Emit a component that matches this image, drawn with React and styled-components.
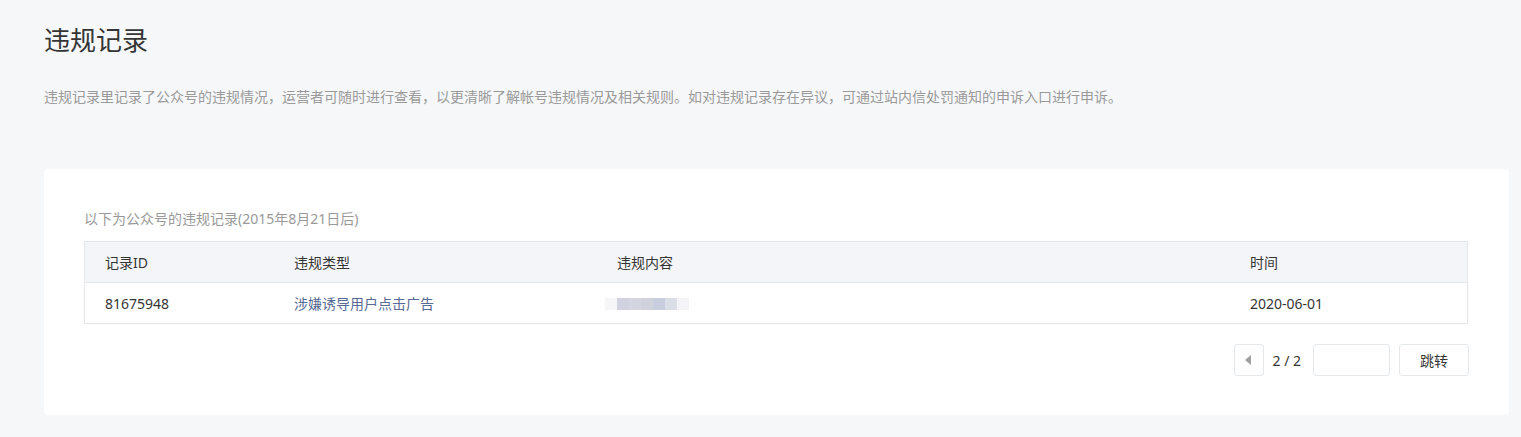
import React from 'react'
import styled, { createGlobalStyle } from 'styled-components'

const GlobalStyle = createGlobalStyle`
  html, body {
    margin: 0;
    padding: 0;
    background: #f6f7f9;
  }
  body {
    font-family: "Noto Sans", "Noto Sans CJK SC", sans-serif;
    color: #353535;
  }
`

const Page = styled.div`
  padding: 22px 12px 0 44px;
`

const Title = styled.h2`
  margin: 0;
  font-size: 26px;
  font-weight: 400;
  line-height: 36px;
  color: #353535;
`

const Desc = styled.p`
  margin: 29px 0 0;
  font-size: 14px;
  line-height: 20px;
  color: #9a9a9a;
`

const Card = styled.div`
  margin-top: 62px;
  background: #fff;
  border-radius: 4px;
  padding: 40px 41px 39px 40px;
`

const Caption = styled.div`
  font-size: 14px;
  line-height: 20px;
  color: #9a9a9a;
`

const Table = styled.div`
  margin-top: 12px;
  border: 1px solid #e4e6eb;
`

const Row = styled.div`
  display: grid;
  grid-template-columns: 189px 323px 633px 1fr;
  align-items: center;
  height: 40px;
  padding-left: 20px;
  font-size: 14px;
  background: ${p => (p.$head ? '#f4f5f8' : '#fff')};
  border-bottom: ${p => (p.$head ? '1px solid #e4e6eb' : 'none')};
`

const Cell = styled.div`
  color: ${p => (p.$link ? '#576b95' : '#353535')};
  white-space: nowrap;
`

const Mosaic = styled.div`
  display: flex;
  height: 12px;
  margin-left: -12px;
  margin-top: 2px;
`

const Tile = styled.span`
  width: 12px;
  height: 12px;
  background: ${p => p.$c};
`

const Pager = styled.div`
  display: flex;
  justify-content: flex-end;
  align-items: center;
  margin-top: 20px;
  margin-right: -1px;
`

const PrevBtn = styled.button`
  width: 30px;
  height: 32px;
  padding: 0;
  border: 1px solid #e4e8eb;
  border-radius: 3px;
  background: #fff;
  display: flex;
  align-items: center;
  justify-content: center;
  cursor: pointer;
`

const Arrow = styled.span`
  width: 0;
  height: 0;
  border-top: 5px solid transparent;
  border-bottom: 5px solid transparent;
  border-right: 6px solid #9e9e9e;
  margin-left: -2px;
`

const PageNum = styled.span`
  margin: 0 12px 0 8px;
  font-size: 14px;
  color: #353535;
`

const PageInput = styled.input`
  box-sizing: border-box;
  width: 77px;
  height: 32px;
  border: 1px solid #e4e8eb;
  border-radius: 3px;
  outline: none;
  padding: 0 8px;
  font-size: 14px;
`

const JumpBtn = styled.button`
  box-sizing: border-box;
  width: 70px;
  height: 32px;
  margin-left: 9px;
  border: 1px solid #e4e8eb;
  border-radius: 3px;
  background: #fff;
  color: #353535;
  font-family: inherit;
  font-size: 14px;
  cursor: pointer;
`

const mosaic = ['#f6f6f9', '#d0d3df', '#d3d6e0', '#d0d2dc', '#c8cedf', '#dcdee7', '#f4f4f8']

export default function App() {
  return (
    <>
      <GlobalStyle />
      <Page>
        <Title>违规记录</Title>
        <Desc>
          违规记录里记录了公众号的违规情况，运营者可随时进行查看，以更清晰了解帐号违规情况及相关规则。如对违规记录存在异议，可通过站内信处罚通知的申诉入口进行申诉。
        </Desc>
        <Card>
          <Caption>以下为公众号的违规记录(2015年8月21日后)</Caption>
          <Table>
            <Row $head>
              <Cell>记录ID</Cell>
              <Cell>违规类型</Cell>
              <Cell>违规内容</Cell>
              <Cell>时间</Cell>
            </Row>
            <Row>
              <Cell>81675948</Cell>
              <Cell $link>涉嫌诱导用户点击广告</Cell>
              <Cell>
                <Mosaic>
                  {mosaic.map((c, i) => (
                    <Tile key={i} $c={c} />
                  ))}
                </Mosaic>
              </Cell>
              <Cell>2020-06-01</Cell>
            </Row>
          </Table>
          <Pager>
            <PrevBtn aria-label="上一页">
              <Arrow />
            </PrevBtn>
            <PageNum>2 / 2</PageNum>
            <PageInput />
            <JumpBtn>跳转</JumpBtn>
          </Pager>
        </Card>
      </Page>
    </>
  )
}
